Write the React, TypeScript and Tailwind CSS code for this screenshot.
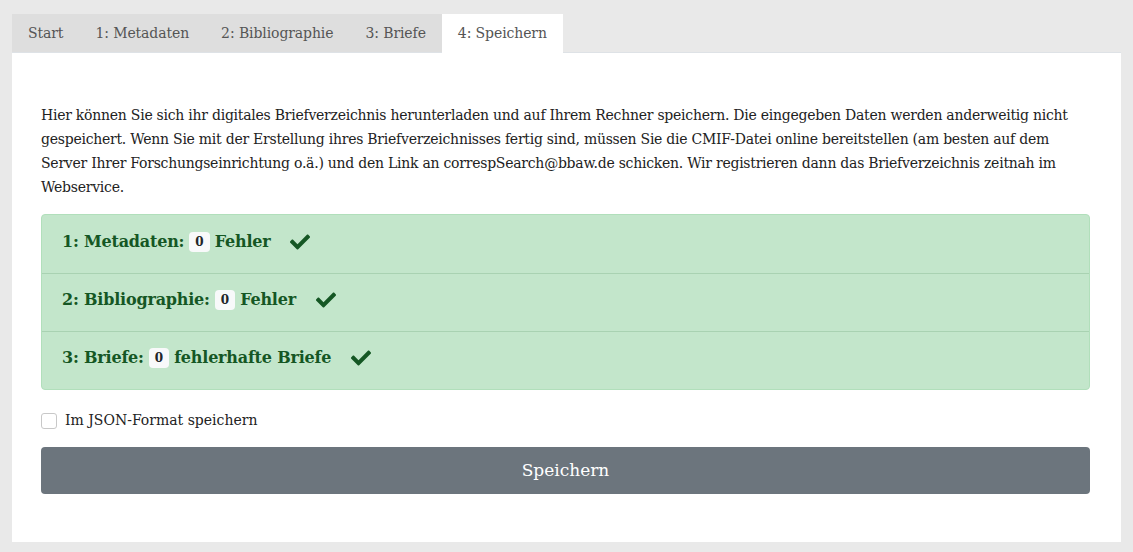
const tabs = ["Start", "1: Metadaten", "2: Bibliographie", "3: Briefe", "4: Speichern"];

const checks = [
  { label: "1: Metadaten:", rest: "Fehler" },
  { label: "2: Bibliographie:", rest: "Fehler" },
  { label: "3: Briefe:", rest: "fehlerhafte Briefe" },
];

function CheckMark() {
  return (
    <svg viewBox="0 0 512 512" className="w-[20px] h-[20px] ml-5 fill-[#155724]">
      <path d="M173.9 439.4l-166.4-166.4c-10-10-10-26.2 0-36.2l36.2-36.2c10-10 26.2-10 36.2 0L192 312.7 432.1 72.6c10-10 26.2-10 36.2 0l36.2 36.2c10 10 10 26.2 0 36.2l-294.4 294.4c-10 10-26.2 10-36.2 0z" />
    </svg>
  );
}

export default function App() {
  return (
    <div className="min-h-screen bg-[#e9e9e9] pt-[14px] px-[12px] font-['DejaVu_Serif',serif]">
      <nav className="flex h-[39px] border-b border-[#dee2e6]">
        <div className="flex bg-[#dedede]">
          {tabs.slice(0, 4).map((t) => (
            <button key={t} type="button" className="px-4 text-[14px] tracking-[-0.1px] text-[#555]">
              {t}
            </button>
          ))}
        </div>
        <button type="button" className="px-4 text-[14px] tracking-[-0.1px] text-[#555] bg-white -mb-px">
          {tabs[4]}
        </button>
      </nav>

      <main className="bg-white pl-[29px] pr-[31px] pt-[50px] h-[489px]">
        <p className="text-[14px] leading-[24px] tracking-[-0.25px] text-[#222]">
          Hier können Sie sich ihr digitales Briefverzeichnis herunterladen und auf Ihrem Rechner speichern. Die eingegeben Daten werden anderweitig nicht gespeichert. Wenn Sie mit der Erstellung ihres Briefverzeichnisses fertig sind, müssen Sie die CMIF-Datei online bereitstellen (am besten auf dem Server Ihrer Forschungseinrichtung o.ä.) und den Link an correspSearch@bbaw.de schicken. Wir registrieren dann das Briefverzeichnis zeitnah im Webservice.
        </p>

        <div className="mt-[15px] rounded-[4px] border border-[#b1dfbb] bg-[#c3e6cb] text-[#155724]">
          {checks.map((c, i) => (
            <div
              key={c.label}
              className={`flex items-center h-[58px] px-[20px] pb-[5px] ${i > 0 ? "border-t border-[#a9d2b2]" : ""}`}
            >
              <span className="text-[16px] font-bold tracking-[-0.2px]">{c.label}</span>
              <span className="mx-[5px] flex h-[20px] items-center rounded-[4px] bg-[#f8f9fa] px-[6px] text-[12px] font-bold text-[#212529]">
                0
              </span>
              <span className="text-[16px] font-bold tracking-[-0.2px]">{c.rest}</span>
              <CheckMark />
            </div>
          ))}
        </div>

        <label className="mt-[20px] flex items-center gap-[8px] text-[14px] text-[#222]">
          <span className="w-[16px] h-[16px] rounded-[3px] border border-[#c8c8c8] bg-white" />
          Im JSON-Format speichern
        </label>

        <button
          type="button"
          className="mt-[16px] w-full h-[47px] rounded-[4px] bg-[#6c757d] text-white text-[17px]"
        >
          Speichern
        </button>
      </main>
    </div>
  );
}
